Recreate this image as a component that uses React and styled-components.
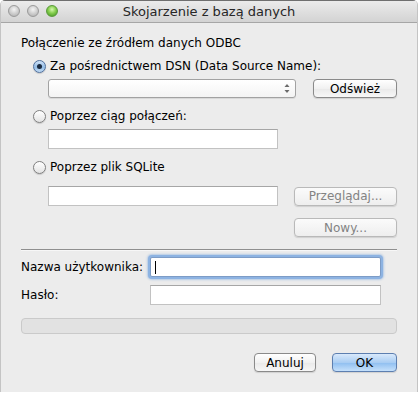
import styled, { createGlobalStyle } from "styled-components";

const GlobalStyle = createGlobalStyle`
  body {
    margin: 0;
    background: #ffffff;
    font-family: "DejaVu Sans", "Liberation Sans", sans-serif;
    font-size: 12px;
    color: #000;
  }
`;

const Window = styled.div`
  width: 418px;
  height: 392px;
  background: #ececec;
  border-radius: 5px 5px 0 0;
  box-sizing: border-box;
  border-left: 1px solid #c4c4c4;
  border-right: 1px solid #c4c4c4;
  display: flex;
  flex-direction: column;
  overflow: hidden;
`;

const TitleBar = styled.div`
  height: 23px;
  flex-shrink: 0;
  position: relative;
  display: flex;
  align-items: center;
  justify-content: center;
  background: linear-gradient(#ebebeb, #d3d3d3);
  border-top: 1px solid #6f6f6f;
  border-bottom: 1px solid #a6a6a6;
  box-sizing: border-box;
  font-size: 13px;
  color: #262626;
`;

const Lights = styled.div`
  position: absolute;
  left: 7px;
  top: 4px;
  display: flex;
  gap: 7px;
`;

const Light = styled.span`
  width: 12px;
  height: 12px;
  border-radius: 50%;
  box-sizing: border-box;
  border: 1px solid ${(p) => (p.$green ? "#5a9a3a" : "#9a9a9a")};
  background: ${(p) =>
    p.$green
      ? "radial-gradient(circle at 50% 35%, #d6f7b0 0%, #86cf4e 45%, #3e8f22 100%)"
      : "radial-gradient(circle at 50% 35%, #f4f4f4 0%, #cfcfcf 50%, #a9a9a9 100%)"};
`;

const Body = styled.div`
  flex: 1;
  display: flex;
  flex-direction: column;
  padding: 12px 20px 0 20px;
`;

const Row = styled.div`
  display: flex;
  align-items: center;
  margin-top: ${(p) => p.$mt || 0}px;
  padding-left: ${(p) => p.$indent || 0}px;
  height: ${(p) => p.$h || 19}px;
  gap: ${(p) => p.$gap || 0}px;
  justify-content: ${(p) => p.$justify || "flex-start"};
`;

const Heading = styled.div`
  height: 16px;
  line-height: 16px;
`;

const RadioCircle = styled.span`
  width: 13px;
  height: 13px;
  border-radius: 50%;
  box-sizing: border-box;
  margin-right: 4px;
  display: flex;
  align-items: center;
  justify-content: center;
  border: 1px solid ${(p) => (p.$on ? "#4f6f9c" : "#7f7f7f")};
  box-shadow: 0 1px 1px rgba(0, 0, 0, 0.15);
  background: ${(p) =>
    p.$on
      ? "linear-gradient(#cfe2f7, #93bce6 55%, #c2dbf4)"
      : "linear-gradient(#ffffff, #f0f0f0 55%, #e3e3e3)"};
  &::after {
    content: "";
    display: ${(p) => (p.$on ? "block" : "none")};
    width: 5px;
    height: 5px;
    border-radius: 50%;
    background: #1b2b40;
  }
`;

const Select = styled.div`
  width: 248px;
  height: 19px;
  box-sizing: border-box;
  border: 1px solid #a2a2a2;
  border-radius: 3px;
  background: linear-gradient(#ffffff, #f4f4f4);
  box-shadow: 0 1px 0 rgba(0, 0, 0, 0.08);
  display: flex;
  align-items: center;
  justify-content: flex-end;
  padding-right: 5px;
`;

const Field = styled.div`
  width: ${(p) => p.$w || 230}px;
  height: ${(p) => p.$h || 20}px;
  box-sizing: border-box;
  background: #fff;
  border: 1px solid #c2c2c2;
  border-top-color: #a6a6a6;
  position: relative;
  ${(p) =>
    p.$focus &&
    `
    border-color: #7d9cc6;
    box-shadow: 0 0 0 2px #8db3e2, 0 0 2px 3px rgba(110, 160, 220, 0.45);
    border-radius: 2px;
  `}
`;

const Caret = styled.span`
  position: absolute;
  left: 4px;
  top: 3px;
  width: 1px;
  height: 13px;
  background: #000;
`;

const Button = styled.div`
  width: ${(p) => p.$w}px;
  height: 19px;
  box-sizing: border-box;
  border-radius: 4px;
  display: flex;
  align-items: center;
  justify-content: center;
  border: 1px solid ${(p) => (p.$disabled ? "#b9b9b9" : p.$primary ? "#5d7fb0" : "#8a8a8a")};
  color: ${(p) => (p.$disabled ? "#838383" : "#000")};
  background: ${(p) =>
    p.$primary
      ? "linear-gradient(#d9e9fb, #a9cdf3 50%, #8ebef0 51%, #c5e0fb)"
      : p.$disabled
      ? "linear-gradient(#fbfbfb, #eeeeee)"
      : "linear-gradient(#ffffff, #f1f1f1 50%, #e9e9e9 51%, #f7f7f7)"};
  box-shadow: 0 1px 1px rgba(0, 0, 0, 0.12);
`;

const Separator = styled.div`
  height: 1px;
  background: #8f8f8f;
  margin-top: 12px;
  border-bottom: 1px solid #f7f7f7;
`;

const FieldLabel = styled.div`
  width: 129px;
`;

const Progress = styled.div`
  height: 16px;
  box-sizing: border-box;
  border: 1px solid #cacaca;
  border-radius: 4px;
  background: #e2e2e2;
  margin-top: 14px;
`;

const Radio = ({ on, children }) => (
  <>
    <RadioCircle $on={on} />
    <span>{children}</span>
  </>
);

export default function App() {
  return (
    <>
      <GlobalStyle />
      <Window>
        <TitleBar>
          <Lights>
            <Light />
            <Light />
            <Light $green />
          </Lights>
          Skojarzenie z bazą danych
        </TitleBar>
        <Body>
          <Heading>Połączenie ze źródłem danych ODBC</Heading>
          <Row $indent={12} $mt={7} $h={16}>
            <Radio on>Za pośrednictwem DSN (Data Source Name):</Radio>
          </Row>
          <Row $indent={27} $mt={5}>
            <Select>
              <svg width="6" height="11" viewBox="0 0 6 11">
                <path d="M0.5 4 L3 1 L5.5 4 Z" fill="#6a6a6a" />
                <path d="M0.5 7 L3 10 L5.5 7 Z" fill="#6a6a6a" />
              </svg>
            </Select>
            <Button $w={84} style={{ marginLeft: 17 }}>
              Odśwież
            </Button>
          </Row>
          <Row $indent={12} $mt={10} $h={16}>
            <Radio>Poprzez ciąg połączeń:</Radio>
          </Row>
          <Row $indent={27} $mt={5}>
            <Field />
          </Row>
          <Row $indent={12} $mt={11} $h={16}>
            <Radio>Poprzez plik SQLite</Radio>
          </Row>
          <Row $indent={27} $mt={11} $h={20}>
            <Field />
            <Button $w={103} $disabled style={{ marginLeft: 16 }}>
              Przeglądaj...
            </Button>
          </Row>
          <Row $justify="flex-end" $mt={12}>
            <Button $w={103} $disabled>
              Nowy...
            </Button>
          </Row>
          <Separator />
          <Row $mt={6}>
            <FieldLabel>Nazwa użytkownika:</FieldLabel>
            <Field $w={231} $focus>
              <Caret />
            </Field>
          </Row>
          <Row $mt={9}>
            <FieldLabel>Hasło:</FieldLabel>
            <Field $w={231} />
          </Row>
          <Progress />
          <Row $justify="flex-end" $mt={19} $gap={16}>
            <Button $w={62}>Anuluj</Button>
            <Button $w={65} $primary>
              OK
            </Button>
          </Row>
        </Body>
      </Window>
    </>
  );
}
